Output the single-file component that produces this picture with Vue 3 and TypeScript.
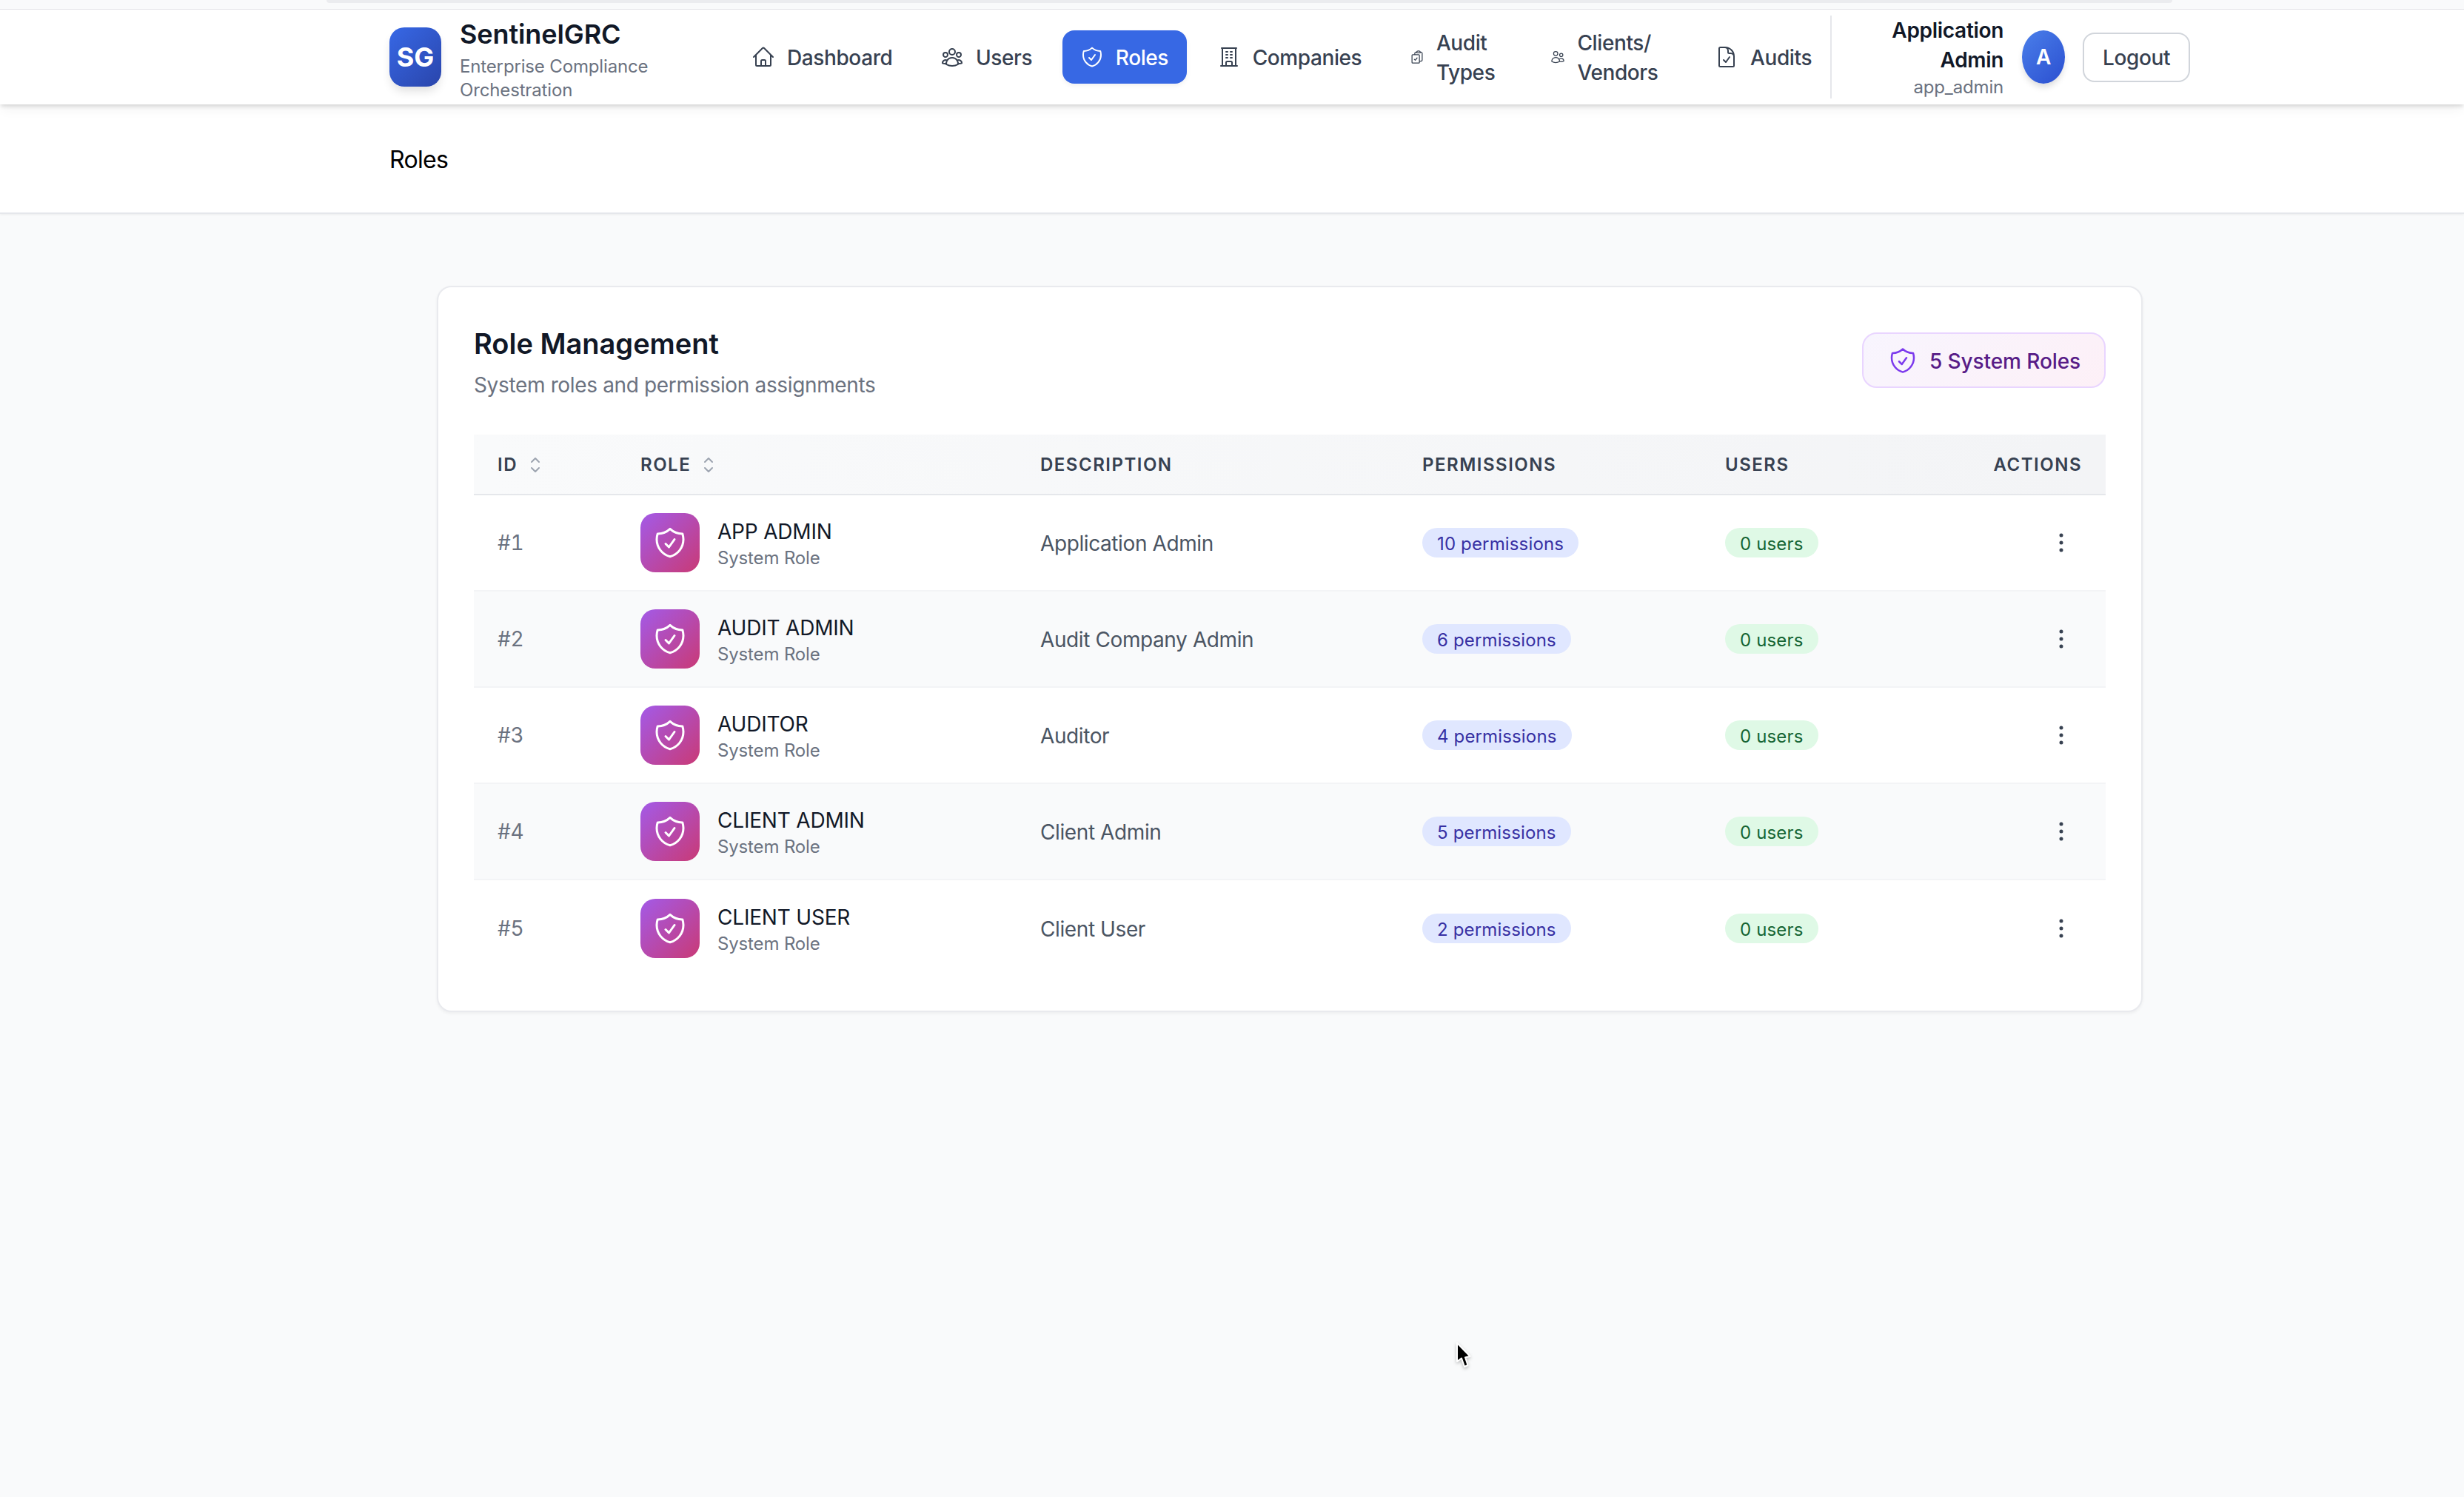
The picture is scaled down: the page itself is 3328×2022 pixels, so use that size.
<script setup lang="ts">
interface NavItem {
  label: string
  icon: string
  active?: boolean
  small?: boolean
  textClass?: string
}

interface RoleRow {
  id: number
  name: string
  description: string
  permissions: number
}

const shieldPath =
  'M9 12.75 11.25 15 15 9.75m-3-7.036A11.959 11.959 0 0 1 3.598 6 11.99 11.99 0 0 0 3 9.749c0 5.592 3.824 10.29 9 11.623 5.176-1.332 9-6.03 9-11.622 0-1.31-.21-2.571-.598-3.751h-.152c-3.196 0-6.1-1.248-8.25-3.285Z'
const sortPath = 'M8.25 15 12 18.75 15.75 15m-7.5-6L12 5.25 15.75 9'
const dotsPath =
  'M12 6.75a.75.75 0 1 1 0-1.5.75.75 0 0 1 0 1.5ZM12 12.75a.75.75 0 1 1 0-1.5.75.75 0 0 1 0 1.5ZM12 18.75a.75.75 0 1 1 0-1.5.75.75 0 0 1 0 1.5Z'

const navItems: NavItem[] = [
  {
    label: 'Dashboard',
    icon: 'm2.25 12 8.954-8.955c.44-.439 1.152-.439 1.591 0L21.75 12M4.5 9.75v10.125c0 .621.504 1.125 1.125 1.125H9.75v-4.875c0-.621.504-1.125 1.125-1.125h2.25c.621 0 1.125.504 1.125 1.125V21h4.125c.621 0 1.125-.504 1.125-1.125V9.75M8.25 21h8.25'
  },
  {
    label: 'Users',
    icon: 'M18 18.72a9.094 9.094 0 0 0 3.741-.479 3 3 0 0 0-4.682-2.72m.94 3.198.001.031c0 .225-.012.447-.037.666A11.944 11.944 0 0 1 12 21c-2.17 0-4.207-.576-5.963-1.584A6.062 6.062 0 0 1 6 18.719m12 0a5.971 5.971 0 0 0-.941-3.197m0 0A5.995 5.995 0 0 0 12 12.75a5.995 5.995 0 0 0-5.058 2.772m0 0a3 3 0 0 0-4.681 2.72 8.986 8.986 0 0 0 3.74.477m.94-3.197a5.971 5.971 0 0 0-.94 3.197M15 6.75a3 3 0 1 1-6 0 3 3 0 0 1 6 0Zm6 3a2.25 2.25 0 1 1-4.5 0 2.25 2.25 0 0 1 4.5 0Zm-13.5 0a2.25 2.25 0 1 1-4.5 0 2.25 2.25 0 0 1 4.5 0Z'
  },
  { label: 'Roles', icon: shieldPath, active: true },
  {
    label: 'Companies',
    icon: 'M3.75 21h16.5M4.5 3h15M5.25 3v18m13.5-18v18M9 6.75h1.5m-1.5 3h1.5m-1.5 3h1.5m3-6H15m-1.5 3H15m-1.5 3H15M9 21v-3.375c0-.621.504-1.125 1.125-1.125h3.75c.621 0 1.125.504 1.125 1.125V21'
  },
  {
    label: 'Audit Types',
    small: true,
    textClass: 'wrap-audit',
    icon: 'M11.35 3.836c-.065.21-.1.433-.1.664 0 .414.336.75.75.75h4.5a.75.75 0 0 0 .75-.75 2.25 2.25 0 0 0-.1-.664m-5.8 0A2.251 2.251 0 0 1 13.5 2.25H15c1.012 0 1.867.668 2.15 1.586m-5.8 0c-.376.023-.75.05-1.124.08C9.095 4.01 8.25 4.973 8.25 6.108V8.25m8.9-4.414c.376.023.75.05 1.124.08 1.131.094 1.976 1.057 1.976 2.192V16.5A2.25 2.25 0 0 1 18 18.75h-2.25m-7.5-10.5H4.875c-.621 0-1.125.504-1.125 1.125v11.25c0 .621.504 1.125 1.125 1.125h9.75c.621 0 1.125-.504 1.125-1.125V18.75m-7.5-10.5h6.375c.621 0 1.125.504 1.125 1.125v9.375m-8.25-3 1.5 1.5 3-3.75'
  },
  {
    label: 'Clients/ Vendors',
    small: true,
    textClass: 'wrap-clients',
    icon: 'M15 19.128a9.38 9.38 0 0 0 2.625.372 9.337 9.337 0 0 0 4.121-.952 4.125 4.125 0 0 0-7.533-2.493M15 19.128v-.003c0-1.113-.285-2.16-.786-3.07M15 19.128v.106A12.318 12.318 0 0 1 8.624 21c-2.331 0-4.512-.645-6.374-1.766l-.001-.109a6.375 6.375 0 0 1 11.964-3.07M12 6.375a3.375 3.375 0 1 1-6.75 0 3.375 3.375 0 0 1 6.75 0Zm8.25 2.25a2.625 2.625 0 1 1-5.25 0 2.625 2.625 0 0 1 5.25 0Z'
  },
  {
    label: 'Audits',
    icon: 'M10.125 2.25h-4.5c-.621 0-1.125.504-1.125 1.125v17.25c0 .621.504 1.125 1.125 1.125h12.75c.621 0 1.125-.504 1.125-1.125v-9M10.125 2.25h.375a9 9 0 0 1 9 9v.375M10.125 2.25A3.375 3.375 0 0 1 13.5 5.625v1.5c0 .621.504 1.125 1.125 1.125h1.5a3.375 3.375 0 0 1 3.375 3.375M9 15l2.25 2.25L15 12'
  }
]

const roles: RoleRow[] = [
  { id: 1, name: 'APP ADMIN', description: 'Application Admin', permissions: 10 },
  { id: 2, name: 'AUDIT ADMIN', description: 'Audit Company Admin', permissions: 6 },
  { id: 3, name: 'AUDITOR', description: 'Auditor', permissions: 4 },
  { id: 4, name: 'CLIENT ADMIN', description: 'Client Admin', permissions: 5 },
  { id: 5, name: 'CLIENT USER', description: 'Client User', permissions: 2 }
]
</script>

<template>
  <div class="page">
    <div class="top-edge"><div class="top-strip"></div></div>

    <header class="app-header">
      <div class="brand">
        <div class="logo">SG</div>
        <div class="brand-text">
          <div class="brand-name">SentinelGRC</div>
          <div class="brand-sub">Enterprise Compliance Orchestration</div>
        </div>
      </div>

      <nav class="nav">
        <a
          v-for="item in navItems"
          :key="item.label"
          class="nav-link"
          :class="{ active: item.active }"
        >
          <svg
            class="nav-icon"
            :class="{ small: item.small }"
            viewBox="0 0 24 24"
            fill="none"
            stroke="currentColor"
            stroke-width="1.5"
            stroke-linecap="round"
            stroke-linejoin="round"
          >
            <path :d="item.icon" />
          </svg>
          <span class="nav-text" :class="item.textClass">{{ item.label }}</span>
        </a>
      </nav>

      <div class="user-area">
        <div class="user-text">
          <div class="user-name">Application Admin</div>
          <div class="user-handle">app_admin</div>
        </div>
        <div class="avatar">A</div>
        <button class="logout" type="button">Logout</button>
      </div>
    </header>

    <div class="crumb-bar"><span class="crumb">Roles</span></div>

    <main class="main">
      <section class="card">
        <div class="card-head">
          <div>
            <h1 class="card-title">Role Management</h1>
            <p class="card-sub">System roles and permission assignments</p>
          </div>
          <div class="count-badge">
            <svg
              class="count-icon"
              viewBox="0 0 24 24"
              fill="none"
              stroke="currentColor"
              stroke-width="1.5"
              stroke-linecap="round"
              stroke-linejoin="round"
            >
              <path :d="shieldPath" />
            </svg>
            <span class="count-text">5 System Roles</span>
          </div>
        </div>

        <table class="table">
          <colgroup>
            <col class="col-id" />
            <col class="col-role" />
            <col class="col-desc" />
            <col class="col-perm" />
            <col class="col-users" />
            <col />
          </colgroup>
          <thead>
            <tr>
              <th>
                <span class="th-inner">
                  ID
                  <svg class="sort" viewBox="0 0 24 24" fill="none" stroke="currentColor" stroke-width="1.5" stroke-linecap="round" stroke-linejoin="round"><path :d="sortPath" /></svg>
                </span>
              </th>
              <th>
                <span class="th-inner">
                  Role
                  <svg class="sort" viewBox="0 0 24 24" fill="none" stroke="currentColor" stroke-width="1.5" stroke-linecap="round" stroke-linejoin="round"><path :d="sortPath" /></svg>
                </span>
              </th>
              <th>Description</th>
              <th>Permissions</th>
              <th>Users</th>
              <th class="right">Actions</th>
            </tr>
          </thead>
          <tbody>
            <tr v-for="role in roles" :key="role.id">
              <td class="id-cell">#{{ role.id }}</td>
              <td>
                <div class="role-cell">
                  <div class="role-icon">
                    <svg viewBox="0 0 24 24" fill="none" stroke="currentColor" stroke-width="1.5" stroke-linecap="round" stroke-linejoin="round"><path :d="shieldPath" /></svg>
                  </div>
                  <div class="role-text">
                    <div class="role-name">{{ role.name }}</div>
                    <div class="role-sub">System Role</div>
                  </div>
                </div>
              </td>
              <td class="desc-cell">{{ role.description }}</td>
              <td><span class="pill pill-perm">{{ role.permissions }} permissions</span></td>
              <td><span class="pill pill-users">0 users</span></td>
              <td class="right">
                <button class="dots" type="button" aria-label="Actions">
                  <svg viewBox="0 0 24 24" fill="none" stroke="currentColor" stroke-width="1.5" stroke-linecap="round" stroke-linejoin="round"><path :d="dotsPath" /></svg>
                </button>
              </td>
            </tr>
          </tbody>
        </table>
      </section>
    </main>

    <svg class="cursor" viewBox="0 0 26 42" aria-hidden="true">
      <path
        d="M5 5 L5 30 L11 25.5 L15 37 L19.5 35 L16 24.5 L22.5 23 Z"
        fill="#000"
        stroke="#fff"
        stroke-width="2"
        stroke-linejoin="round"
      />
    </svg>
  </div>
</template>

<style>
html,
body {
  margin: 0;
  background: #f9fafb;
}
</style>

<style scoped>
.page {
  position: relative;
  width: 3328px;
  height: 2022px;
  overflow: hidden;
  background: #f9fafb;
  font-family: Inter, "Liberation Sans", sans-serif;
  color: #111827;
}

.top-edge {
  height: 12px;
  padding: 0 394px 0 441px;
  border-bottom: 1px solid #e2e3e7;
}

.top-strip {
  height: 4px;
  background: #ebecef;
  border-radius: 0 0 8px 8px;
}

.app-header {
  position: relative;
  z-index: 2;
  display: flex;
  align-items: center;
  height: 128px;
  padding-left: 526px;
  background: #fff;
  box-shadow: 0 4px 5px -1px rgba(0, 0, 0, 0.12), 0 10px 15px -3px rgba(0, 0, 0, 0.05);
}

.brand {
  display: flex;
  align-items: center;
  gap: 25px;
  width: 465px;
  flex: none;
}

.logo {
  display: flex;
  align-items: center;
  justify-content: center;
  flex: none;
  width: 70px;
  height: 80px;
  border-radius: 20px;
  background: linear-gradient(135deg, #3768e6, #2a45ab);
  color: #fff;
  font-size: 36px;
  font-weight: 700;
  box-shadow: 0 8px 14px -3px rgba(0, 0, 0, 0.14);
}

.brand-text {
  margin-top: 10px;
  width: 290px;
}

.brand-name {
  font-size: 36px;
  line-height: 40px;
  font-weight: 600;
  letter-spacing: -0.1px;
  color: #111827;
}

.brand-sub {
  margin-top: 8px;
  font-size: 24px;
  line-height: 32px;
  letter-spacing: -0.15px;
  color: #6b7280;
}

.nav {
  display: flex;
  align-items: center;
  gap: 16.6px;
}

.nav-link {
  display: flex;
  align-items: center;
  gap: 16px;
  height: 72px;
  padding: 0 24px;
  border-radius: 16px;
  color: #374151;
  font-size: 28px;
  line-height: 40px;
  font-weight: 500;
  letter-spacing: -0.4px;
}

.nav-text {
  padding-top: 2px;
}

.nav-link.active {
  padding: 0 25px 0 24px;
  background: #3768e4;
  color: #fff;
  box-shadow: 0 3px 6px rgba(0, 0, 0, 0.06);
}

.nav-icon {
  flex: none;
  width: 32px;
  height: 32px;
}

.nav-icon.small {
  width: 20px;
  height: 20px;
}

.wrap-audit {
  width: 90px;
}

.wrap-clients {
  width: 121px;
}

.user-area {
  display: flex;
  align-items: center;
  flex: none;
  height: 112px;
  margin-left: 1px;
  border-left: 2px solid #e5e7eb;
}

.user-text {
  width: 232px;
  text-align: right;
}

.user-name {
  margin-left: auto;
  width: 170px;
  font-size: 28px;
  line-height: 40px;
  font-weight: 600;
  letter-spacing: -0.3px;
  color: #111827;
}

.user-handle {
  padding-top: 1px;
  font-size: 24px;
  line-height: 32px;
  letter-spacing: -0.15px;
  color: #6b7280;
}

.avatar {
  display: flex;
  align-items: center;
  justify-content: center;
  flex: none;
  width: 58px;
  height: 72px;
  margin-left: 25px;
  border-radius: 50%;
  background: linear-gradient(135deg, #4a7fea, #2b4fd0);
  color: #fff;
  font-size: 28px;
  font-weight: 600;
  box-shadow: 0 6px 10px -2px rgba(0, 0, 0, 0.16);
}

.logout {
  flex: none;
  height: 67px;
  margin-left: 24px;
  padding: 2px 25px 0;
  border: 2px solid #d1d5db;
  border-radius: 16px;
  background: #fff;
  color: #374151;
  font-family: inherit;
  font-size: 28px;
  font-weight: 500;
  letter-spacing: -0.4px;
}

.crumb-bar {
  display: flex;
  align-items: center;
  box-sizing: border-box;
  height: 148px;
  padding: 4px 0 0 526px;
  background: #fff;
  border-bottom: 2px solid #e5e7eb;
  box-shadow: 0 1px 3px rgba(0, 0, 0, 0.06);
}

.crumb {
  color: #000;
  font-size: 32px;
  line-height: 48px;
  letter-spacing: -0.7px;
}

.main {
  padding: 97px 0 0 590px;
}

.card {
  box-sizing: border-box;
  width: 2304px;
  padding: 52px 48px 46px;
  background: #fff;
  border: 2px solid #e9eaee;
  border-radius: 20px;
  box-shadow: 0 2px 4px rgba(0, 0, 0, 0.05);
}

.card-head {
  display: flex;
  justify-content: space-between;
  align-items: flex-start;
  margin-bottom: 47px;
}

.card-title {
  margin: 0;
  font-size: 38px;
  line-height: 48px;
  font-weight: 600;
  color: #111827;
}

.card-sub {
  margin: 12px 0 0;
  font-size: 28px;
  line-height: 40px;
  letter-spacing: -0.35px;
  color: #6b7280;
}

.count-badge {
  display: flex;
  align-items: center;
  gap: 16px;
  box-sizing: border-box;
  height: 75px;
  margin-top: 9px;
  padding: 0 32px 0 33px;
  border: 2px solid #e9d5ff;
  border-radius: 20px;
  background: linear-gradient(135deg, #f8f5fe, #fdf0f7);
  color: #581c87;
  font-size: 28px;
  font-weight: 500;
  letter-spacing: -0.1px;
}

.count-text {
  padding-top: 2px;
}

.count-icon {
  width: 40px;
  height: 40px;
  color: #7c3aed;
}

.table {
  width: 2204px;
  table-layout: fixed;
  border-collapse: separate;
  border-spacing: 0;
}

.col-id {
  width: 193px;
}

.col-role {
  width: 540px;
}

.col-desc {
  width: 516px;
}

.col-perm {
  width: 409px;
}

.col-users {
  width: 320px;
}

thead tr {
  background: linear-gradient(90deg, #f9fafb, #f3f4f6);
}

th {
  box-sizing: border-box;
  height: 82px;
  padding: 1px 32px 0;
  border-bottom: 2px solid #e5e7eb;
  color: #374151;
  font-size: 24px;
  font-weight: 600;
  letter-spacing: 1.5px;
  text-align: left;
  text-transform: uppercase;
}

.th-inner {
  display: inline-flex;
  align-items: center;
  gap: 8px;
}

.sort {
  width: 32px;
  height: 32px;
  color: #9ca3af;
}

td {
  box-sizing: border-box;
  height: 130px;
  padding: 0 32px;
  border-bottom: 2px solid #f3f4f6;
  font-size: 28px;
  letter-spacing: -0.4px;
}

tbody tr:nth-child(even) td {
  background: #f9fafb;
}

tbody tr:last-child td {
  border-bottom: none;
}

.right {
  text-align: right;
}

.id-cell {
  color: #6b7280;
  font-variant-numeric: tabular-nums;
  letter-spacing: -0.3px;
}

.role-cell {
  display: flex;
  align-items: center;
  gap: 24px;
}

.role-icon {
  display: flex;
  align-items: center;
  justify-content: center;
  flex: none;
  width: 80px;
  height: 80px;
  border-radius: 20px;
  background: linear-gradient(135deg, #a35ae8, #c93a76);
  color: #fff;
}

.role-icon svg {
  width: 48px;
  height: 48px;
}

.role-text {
  padding-top: 2px;
}

.role-name {
  color: #111827;
  font-size: 28px;
  line-height: 40px;
  font-weight: 400;
  letter-spacing: -0.2px;
}

.role-sub {
  color: #6b7280;
  font-size: 24px;
  line-height: 32px;
  letter-spacing: -0.15px;
}

.desc-cell {
  padding-top: 2px;
  color: #4b5563;
}

.pill {
  display: inline-flex;
  align-items: center;
  box-sizing: border-box;
  height: 40px;
  padding: 2px 20px 0;
  border-radius: 20px;
  font-size: 24px;
  font-weight: 400;
  letter-spacing: 0.15px;
  vertical-align: middle;
}

.pill-perm {
  background: #e0e7ff;
  color: #3730a3;
}

.pill-users {
  background: #dff9e6;
  color: #166534;
}

.dots {
  display: inline-flex;
  padding: 8px;
  border: none;
  background: none;
  color: #374151;
  vertical-align: middle;
}

.dots svg {
  width: 40px;
  height: 40px;
}

.cursor {
  position: absolute;
  left: 1963px;
  top: 1809px;
  width: 26px;
  height: 42px;
  filter: drop-shadow(0 2px 2px rgba(0, 0, 0, 0.25));
}
</style>
